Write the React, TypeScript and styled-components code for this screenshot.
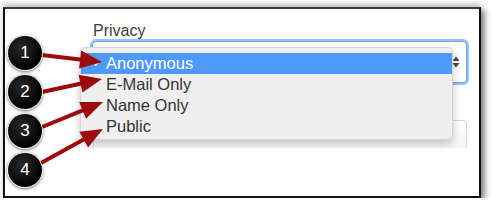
import styled, { createGlobalStyle } from "styled-components"

const GlobalStyle = createGlobalStyle`
  html, body {
    margin: 0;
    padding: 0;
    background: #ffffff;
  }
  body {
    font-family: "Liberation Sans", Arial, sans-serif;
  }
`

type Option = {
  label: string,
  selected?: boolean,
}

const options: Option[] = [
  { label: "Anonymous", selected: true },
  { label: "E-Mail Only" },
  { label: "Name Only" },
  { label: "Public" },
]

// arrows in page coordinates: start (near the callout) and tip (near the option)
const arrows = [
  { from: [42, 55], to: [102, 62] },
  { from: [42, 92], to: [102, 79] },
  { from: [42, 127], to: [103, 102] },
  { from: [41, 163], to: [103, 129] },
]

function arrowParts(from: number[], to: number[]) {
  const headLength = 22
  const headHalf = 9
  const dx = to[0] - from[0]
  const dy = to[1] - from[1]
  const len = Math.hypot(dx, dy)
  const ux = dx / len
  const uy = dy / len
  const bx = to[0] - ux * headLength
  const by = to[1] - uy * headLength
  const px = -uy * headHalf
  const py = ux * headHalf
  return {
    line: { x1: from[0], y1: from[1], x2: bx + ux * 2, y2: by + uy * 2 },
    head: `${to[0]},${to[1]} ${bx + px},${by + py} ${bx - px},${by - py}`,
  }
}

export default function App() {
  return (
    <>
      <GlobalStyle />
      <Frame>
        <Field>
          <Label>Privacy</Label>
          <SelectWrap>
            <SelectBox>
              <Stepper viewBox="0 0 8 12" aria-hidden="true">
                <path d="M4 0.5 L7.5 5 H0.5 Z" />
                <path d="M4 11.5 L7.5 7 H0.5 Z" />
              </Stepper>
            </SelectBox>
            <Menu role="listbox">
              {options.map((option) => (
                <MenuItem key={option.label} $selected={option.selected} role="option">
                  {option.selected && <Check>✓</Check>}
                  {option.label}
                </MenuItem>
              ))}
            </Menu>
          </SelectWrap>
          <TextBox />
        </Field>

        <Callouts>
          {[1, 2, 3, 4].map((n) => (
            <Callout key={n}>{n}</Callout>
          ))}
        </Callouts>

        <ArrowLayer viewBox="5 9 474 187" aria-hidden="true">
          {arrows.map((arrow, i) => {
            const { line, head } = arrowParts(arrow.from, arrow.to)
            return (
              <g key={i}>
                <line {...line} stroke="#9c0a0c" strokeWidth="4" strokeLinecap="round" />
                <polygon points={head} fill="#9c0a0c" />
              </g>
            )
          })}
        </ArrowLayer>
      </Frame>
    </>
  )
}

const Frame = styled.div`
  position: relative;
  box-sizing: border-box;
  width: 478px;
  height: 191px;
  margin: 7px 0 0 3px;
  border: 2px solid #111111;
  border-top-color: #3a3a3a;
  background: #ffffff;
  box-shadow: 4px 3px 6px rgba(0, 0, 0, 0.45), 0 -4px 5px rgba(0, 0, 0, 0.18);
  overflow: hidden;
`

const Field = styled.div`
  display: flex;
  flex-direction: column;
  width: 375px;
  padding: 12px 0 0 87px;
`

const Label = styled.div`
  font-size: 16px;
  line-height: 20px;
  color: #3d3d3d;
  padding-left: 1px;
`

const SelectWrap = styled.div`
  position: relative;
  height: 42px;
`

const SelectBox = styled.div`
  box-sizing: border-box;
  height: 100%;
  border: 1px solid #6aa5f3;
  border-radius: 4px;
  background: #ffffff;
  box-shadow: 0 0 0 2px #9cc3f7;
  display: flex;
  align-items: center;
  justify-content: flex-end;
  padding-right: 6px;
`

const Stepper = styled.svg`
  width: 8px;
  height: 12px;
  fill: #444444;
`

const Menu = styled.div`
  position: absolute;
  left: -12px;
  top: 6px;
  box-sizing: border-box;
  width: 373px;
  height: 93px;
  padding: 5px 0 4px;
  background: #efefef;
  border: 1px solid #d6d6d6;
  border-radius: 5px;
  box-shadow: 0 4px 9px rgba(0, 0, 0, 0.22);
  z-index: 1;
`

const MenuItem = styled.div<{ $selected?: boolean }>`
  position: relative;
  height: 21px;
  line-height: 21px;
  padding-left: 25px;
  font-size: 16.5px;
  color: ${({ $selected }) => ($selected ? "#ffffff" : "#333333")};
  background: ${({ $selected }) => ($selected ? "#4f98fc" : "transparent")};
`

const Check = styled.span`
  position: absolute;
  left: 12px;
  top: 0;
  font-size: 10px;
  color: #ffffff;
`

const TextBox = styled.div`
  box-sizing: border-box;
  margin-top: 37px;
  margin-left: 1px;
  width: 374px;
  height: 28px;
  border: 1px solid #d4d4d4;
  border-bottom: none;
  border-radius: 4px 4px 0 0;
  background: linear-gradient(#ffffff, #f6f6f6);
`

const Callouts = styled.div`
  position: absolute;
  left: 2px;
  top: 26px;
  display: flex;
  flex-direction: column;
  gap: 3px;
  z-index: 3;
`

const Callout = styled.div`
  box-sizing: border-box;
  width: 36px;
  height: 36px;
  border-radius: 50%;
  border: 1.5px solid #e8e8e8;
  background: radial-gradient(circle at 40% 35%, #2a2a2a, #000000 70%);
  box-shadow: 0 1px 3px rgba(0, 0, 0, 0.55);
  color: #ffffff;
  font-size: 17px;
  line-height: 33px;
  text-align: center;
`

const ArrowLayer = styled.svg`
  position: absolute;
  left: 0;
  top: 0;
  width: 474px;
  height: 187px;
  z-index: 2;
  pointer-events: none;
`
